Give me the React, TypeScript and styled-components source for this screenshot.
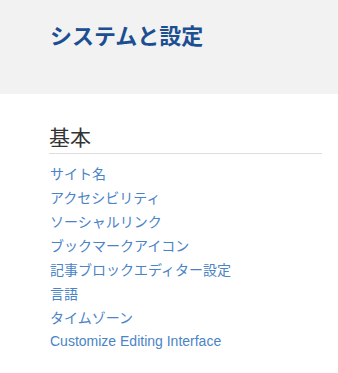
import React from "react";
import styled, { createGlobalStyle } from "styled-components";

const GlobalStyle = createGlobalStyle`
  html, body {
    margin: 0;
    padding: 0;
    background: #ffffff;
    font-family: "Liberation Sans", "Noto Sans CJK JP", sans-serif;
  }
`;

const Page = styled.div`
  display: flex;
  flex-direction: column;
  width: 338px;
`;

const Header = styled.header`
  height: 94px;
  box-sizing: border-box;
  background: #f2f2f2;
  padding: 22px 0 0 50px;
`;

const Title = styled.h1`
  margin: 0;
  font-size: 22px;
  line-height: 30px;
  font-weight: 700;
  color: #1c4f92;
  font-family: "Liberation Sans", "Noto Sans CJK JP", sans-serif;
`;

const Section = styled.section`
  display: flex;
  flex-direction: column;
  padding: 29px 16px 0 49px;
`;

const SectionHeading = styled.h2`
  margin: 0;
  padding-bottom: 1px;
  font-size: 21px;
  line-height: 29px;
  font-weight: 400;
  color: #333333;
  border-bottom: 1px solid #dedede;
`;

const LinkList = styled.ul`
  list-style: none;
  margin: 7px 0 0;
  padding: 0 0 0 1px;
  display: flex;
  flex-direction: column;
`;

const LinkItem = styled.li`
  height: 24px;
  display: flex;
  align-items: center;
`;

const Link = styled.a`
  font-size: 14px;
  color: #4a84c6;
  text-decoration: none;
  white-space: nowrap;
`;

const links = [
  "サイト名",
  "アクセシビリティ",
  "ソーシャルリンク",
  "ブックマークアイコン",
  "記事ブロックエディター設定",
  "言語",
  "タイムゾーン",
  "Customize Editing Interface",
];

export default function App() {
  return (
    <>
      <GlobalStyle />
      <Page>
        <Header>
          <Title>システムと設定</Title>
        </Header>
        <Section>
          <SectionHeading>基本</SectionHeading>
          <LinkList>
            {links.map((l) => (
              <LinkItem key={l}>
                <Link href="#">{l}</Link>
              </LinkItem>
            ))}
          </LinkList>
        </Section>
      </Page>
    </>
  );
}
